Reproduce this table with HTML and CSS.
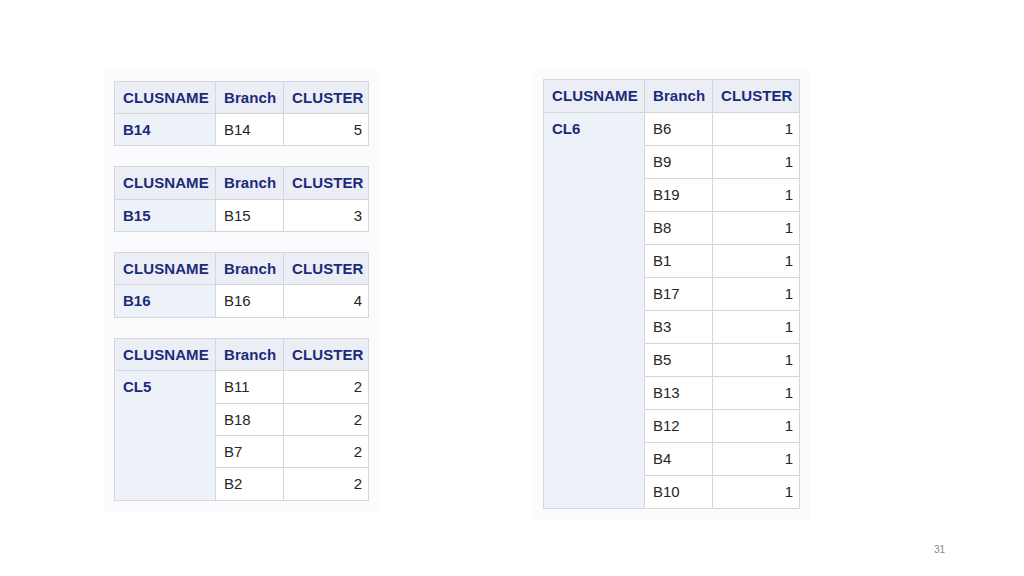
FILE: index.html
```html
<!DOCTYPE html>
<html lang="en">
<head>
<meta charset="utf-8">
<title>Clusters</title>
<link rel="stylesheet" href="styles.css">
</head>
<body>
<div class="slide">
  <main class="content">
    <section class="panel panel-left">
      <table class="tbl tbl-left">
        <colgroup><col class="c1"><col class="c2"><col class="c3"></colgroup>
        <thead><tr><th>CLUSNAME</th><th>Branch</th><th>CLUSTER</th></tr></thead>
        <tbody><tr><td class="name">B14</td><td>B14</td><td class="num">5</td></tr></tbody>
      </table>
      <table class="tbl tbl-left">
        <colgroup><col class="c1"><col class="c2"><col class="c3"></colgroup>
        <thead><tr><th>CLUSNAME</th><th>Branch</th><th>CLUSTER</th></tr></thead>
        <tbody><tr><td class="name">B15</td><td>B15</td><td class="num">3</td></tr></tbody>
      </table>
      <table class="tbl tbl-left">
        <colgroup><col class="c1"><col class="c2"><col class="c3"></colgroup>
        <thead><tr><th>CLUSNAME</th><th>Branch</th><th>CLUSTER</th></tr></thead>
        <tbody><tr><td class="name">B16</td><td>B16</td><td class="num">4</td></tr></tbody>
      </table>
      <table class="tbl tbl-left">
        <colgroup><col class="c1"><col class="c2"><col class="c3"></colgroup>
        <thead><tr><th>CLUSNAME</th><th>Branch</th><th>CLUSTER</th></tr></thead>
        <tbody>
          <tr><td class="name" rowspan="4">CL5</td><td>B11</td><td class="num">2</td></tr>
          <tr><td>B18</td><td class="num">2</td></tr>
          <tr><td>B7</td><td class="num">2</td></tr>
          <tr><td>B2</td><td class="num">2</td></tr>
        </tbody>
      </table>
    </section>
    <section class="panel panel-right">
      <table class="tbl tbl-right">
        <colgroup><col class="c1"><col class="c2"><col class="c3"></colgroup>
        <thead><tr><th>CLUSNAME</th><th>Branch</th><th>CLUSTER</th></tr></thead>
        <tbody>
          <tr><td class="name" rowspan="12">CL6</td><td>B6</td><td class="num">1</td></tr>
          <tr><td>B9</td><td class="num">1</td></tr>
          <tr><td>B19</td><td class="num">1</td></tr>
          <tr><td>B8</td><td class="num">1</td></tr>
          <tr><td>B1</td><td class="num">1</td></tr>
          <tr><td>B17</td><td class="num">1</td></tr>
          <tr><td>B3</td><td class="num">1</td></tr>
          <tr><td>B5</td><td class="num">1</td></tr>
          <tr><td>B13</td><td class="num">1</td></tr>
          <tr><td>B12</td><td class="num">1</td></tr>
          <tr><td>B4</td><td class="num">1</td></tr>
          <tr><td>B10</td><td class="num">1</td></tr>
        </tbody>
      </table>
    </section>
  </main>
  <footer class="footer"><span class="page-num">31</span></footer>
</div>
</body>
</html>
```

FILE: styles.css
```css
html, body {
  margin: 0;
  padding: 0;
  background: #ffffff;
}

.slide {
  width: 1024px;
  height: 576px;
  display: flex;
  flex-direction: column;
  font-family: "Liberation Sans", Arial, sans-serif;
  overflow: hidden;
}

.content {
  box-sizing: border-box;
  display: flex;
  align-items: flex-start;
  gap: 154px;
  padding: 70px 0 0 104px;
  height: 530px;
  flex: none;
}

.panel {
  background: #fbfbfd;
  padding: 10px;
  display: flex;
  flex-direction: column;
  gap: 20px;
}

.panel-left {
  padding-top: 10.5px;
}

.panel-right {
  margin-top: -1px;
}

.tbl {
  border-collapse: collapse;
  table-layout: fixed;
  width: 255px;
  border: 1px solid #c3c6cc;
  font-size: 15px;
  line-height: 18px;
}

.tbl-right {
  width: 257px;
}

.c1 { width: 101px; }
.c2 { width: 68px; }
.c3 { width: auto; }

.tbl th,
.tbl td {
  border: 1px solid #d3d6db;
  padding: 7px 6px 0 8px;
  text-align: left;
  vertical-align: top;
  white-space: nowrap;
  box-sizing: border-box;
}

.tbl th {
  background: #ebeff5;
  color: #1c2a7a;
  font-weight: bold;
  letter-spacing: 0.1px;
}

.tbl td {
  background: #ffffff;
  color: #262626;
}

.tbl td.name {
  background: #edf2f9;
  color: #1c2a7a;
  font-weight: bold;
}

.tbl td.num {
  text-align: right;
}

.tbl-left tr {
  height: 32.4px;
}

.tbl-right tr {
  height: 33px;
}

.footer {
  display: flex;
  justify-content: flex-end;
  padding: 14px 79px 0 0;
}

.page-num {
  font-size: 10px;
  line-height: 12px;
  color: #8a8a8a;
}
```
